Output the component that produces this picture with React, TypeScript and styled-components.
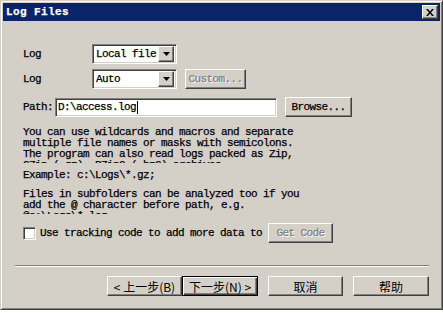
import { FC, ReactNode } from 'react';
import styled, { createGlobalStyle, css } from 'styled-components';

const GlobalStyle = createGlobalStyle`
	html, body {
		margin: 0;
		padding: 0;
		background: #ffffff;
	}
	body {
		font-family: 'Liberation Mono', 'Noto Sans CJK SC', monospace;
		font-size: 11px;
		letter-spacing: -0.6px;
		color: #000000;
		-webkit-text-stroke: 0.25px currentColor;
	}
`;

const raised = css`
	border: 1px solid;
	border-color: #ffffff #404040 #404040 #ffffff;
	box-shadow: inset -1px -1px #808080, inset 1px 1px #d4d0c8;
`;

const sunken = css`
	border: 1px solid;
	border-color: #808080 #ffffff #ffffff #808080;
	box-shadow: inset 1px 1px #404040, inset -1px -1px #d4d0c8;
`;

const Window = styled.div`
	width: 443px;
	height: 310px;
	box-sizing: border-box;
	background: #d4d0c8;
	border: 1px solid;
	border-color: #d4d0c8 #404040 #404040 #d4d0c8;
	box-shadow: inset 1px 1px #ffffff, inset -1px -1px #808080;
	padding: 2px;
	display: flex;
	flex-direction: column;
`;

const TitleBar = styled.div`
	height: 18px;
	flex-shrink: 0;
	background: #0a246a;
	display: flex;
	align-items: center;
	justify-content: space-between;
	padding: 0 2px 0 3px;
`;

const Title = styled.span`
	color: #ffffff;
	font-weight: bold;
	letter-spacing: 0.4px;
`;

const CloseButton = styled.div`
	${raised};
	box-sizing: border-box;
	width: 16px;
	height: 14px;
	background: #d4d0c8;
	display: flex;
	align-items: center;
	justify-content: center;
`;

const Body = styled.div`
	flex: 1;
	display: flex;
	flex-direction: column;
`;

const Content = styled.div`
	display: flex;
	flex-direction: column;
	padding: 23px 0 0 20px;
`;

const Row = styled.div<{ $top?: number }>`
	display: flex;
	align-items: center;
	height: 20px;
	margin-top: ${(p) => p.$top ?? 0}px;
`;

const Label = styled.span<{ $width: number }>`
	width: ${(p) => p.$width}px;
	flex-shrink: 0;
`;

const Combo = styled.div`
	${sunken};
	box-sizing: border-box;
	width: 85px;
	height: 20px;
	background: #ffffff;
	display: flex;
	align-items: center;
	padding: 2px;
	margin-right: 8px;
`;

const ComboText = styled.span`
	flex: 1;
	min-width: 0;
	padding-left: 1px;
	white-space: nowrap;
	overflow: hidden;
`;

const DropButton = styled.div`
	${raised};
	box-sizing: border-box;
	width: 16px;
	height: 16px;
	flex-shrink: 0;
	background: #d4d0c8;
	display: flex;
	align-items: center;
	justify-content: center;
`;

const Button = styled.div<{ $width: number; $disabled?: boolean; $default?: boolean }>`
	${raised};
	box-sizing: border-box;
	width: ${(p) => p.$width}px;
	height: 20px;
	background: #d4d0c8;
	display: flex;
	align-items: center;
	justify-content: center;
	white-space: nowrap;
	flex-shrink: 0;
	${(p) =>
		p.$disabled &&
		css`
			color: #808080;
			text-shadow: 1px 1px #ffffff;
		`}
	${(p) =>
		p.$default &&
		css`
			border: 1px solid #000000;
			box-shadow: inset 1px 1px #ffffff, inset -1px -1px #404040, inset -2px -2px #808080;
		`}
`;

const PathInput = styled.div`
	${sunken};
	box-sizing: border-box;
	width: 222px;
	height: 19px;
	background: #ffffff;
	display: flex;
	align-items: center;
	padding-left: 2px;
	margin-right: 8px;
`;

const Caret = styled.span`
	display: inline-block;
	width: 1px;
	height: 13px;
	background: #000000;
	margin-left: 1px;
`;

const Help = styled.div<{ $top: number; $height: number }>`
	width: 330px;
	height: ${(p) => p.$height}px;
	margin-top: ${(p) => p.$top}px;
	overflow: hidden;
	line-height: 11px;
	white-space: pre;
`;

const CheckBox = styled.div`
	${sunken};
	box-sizing: border-box;
	width: 13px;
	height: 13px;
	background: #ffffff;
	margin-right: 4px;
	flex-shrink: 0;
`;

const CheckText = styled.span`
	width: 228px;
	flex-shrink: 0;
	white-space: nowrap;
`;

const Footer = styled.div`
	display: flex;
	flex-direction: column;
	padding: 0 11px 0 12px;
	margin-top: 22px;
`;

const Separator = styled.div`
	height: 0;
	border-top: 1px solid #808080;
	border-bottom: 1px solid #ffffff;
`;

const ButtonBar = styled.div`
	display: flex;
	justify-content: flex-end;
	margin-top: 9px;
	gap: 10px;
`;

const StepGroup = styled.div`
	display: flex;
`;

const WizardButton = styled(Button)`
	font-family: 'Noto Sans CJK SC', sans-serif;
	font-size: 12px;
	letter-spacing: 0;
	-webkit-text-stroke: 0;
`;

const Arrow: FC = () => (
	<svg width="7" height="4" viewBox="0 0 7 4">
		<path d="M0 0h7L3.5 4z" fill="#000" />
	</svg>
);

const CloseGlyph: FC = () => (
	<svg width="8" height="7" viewBox="0 0 8 7">
		<path d="M0 0h2l2 2.5L6 0h2L5 3.5 8 7H6L4 4.5 2 7H0l3-3.5z" fill="#000" />
	</svg>
);

const ComboBox: FC<{ children: ReactNode }> = ({ children }) => (
	<Combo>
		<ComboText>{children}</ComboText>
		<DropButton>
			<Arrow />
		</DropButton>
	</Combo>
);

const App: FC = () => (
	<>
		<GlobalStyle />
		<Window>
			<TitleBar>
				<Title>Log Files</Title>
				<CloseButton>
					<CloseGlyph />
				</CloseButton>
			</TitleBar>
			<Body>
				<Content>
					<Row>
						<Label $width={69}>Log</Label>
						<ComboBox>Local file</ComboBox>
					</Row>
					<Row $top={5}>
						<Label $width={69}>Log</Label>
						<ComboBox>Auto</ComboBox>
						<Button $width={61} $disabled>
							Custom...
						</Button>
					</Row>
					<Row $top={8}>
						<Label $width={32}>Path:</Label>
						<PathInput>
							D:\access.log
							<Caret />
						</PathInput>
						<Button $width={67}>Browse...</Button>
					</Row>
					<Help $top={10} $height={36}>
						{'You can use wildcards and macros and separate\nmultiple file names or masks with semicolons.\nThe program can also read logs packed as Zip,\nGZip (.gz), BZip2 (.bz2) archives.'}
					</Help>
					<Help $top={7} $height={11}>
						{'Example: c:\\Logs\\*.gz;'}
					</Help>
					<Help $top={8} $height={25}>
						{'Files in subfolders can be analyzed too if you\nadd the @ character before path, e.g.\n@c:\\Logs\\*.log'}
					</Help>
					<Row $top={9}>
						<CheckBox />
						<CheckText>Use tracking code to add more data to</CheckText>
						<Button $width={65} $disabled>
							Get Code
						</Button>
					</Row>
				</Content>
				<Footer>
					<Separator />
					<ButtonBar>
						<StepGroup>
							<WizardButton $width={75}>&lt; 上一步(B)</WizardButton>
							<WizardButton $width={76} $default>
								下一步(N) &gt;
							</WizardButton>
						</StepGroup>
						<WizardButton $width={75}>取消</WizardButton>
						<WizardButton $width={76}>帮助</WizardButton>
					</ButtonBar>
				</Footer>
			</Body>
		</Window>
	</>
);

export default App;
